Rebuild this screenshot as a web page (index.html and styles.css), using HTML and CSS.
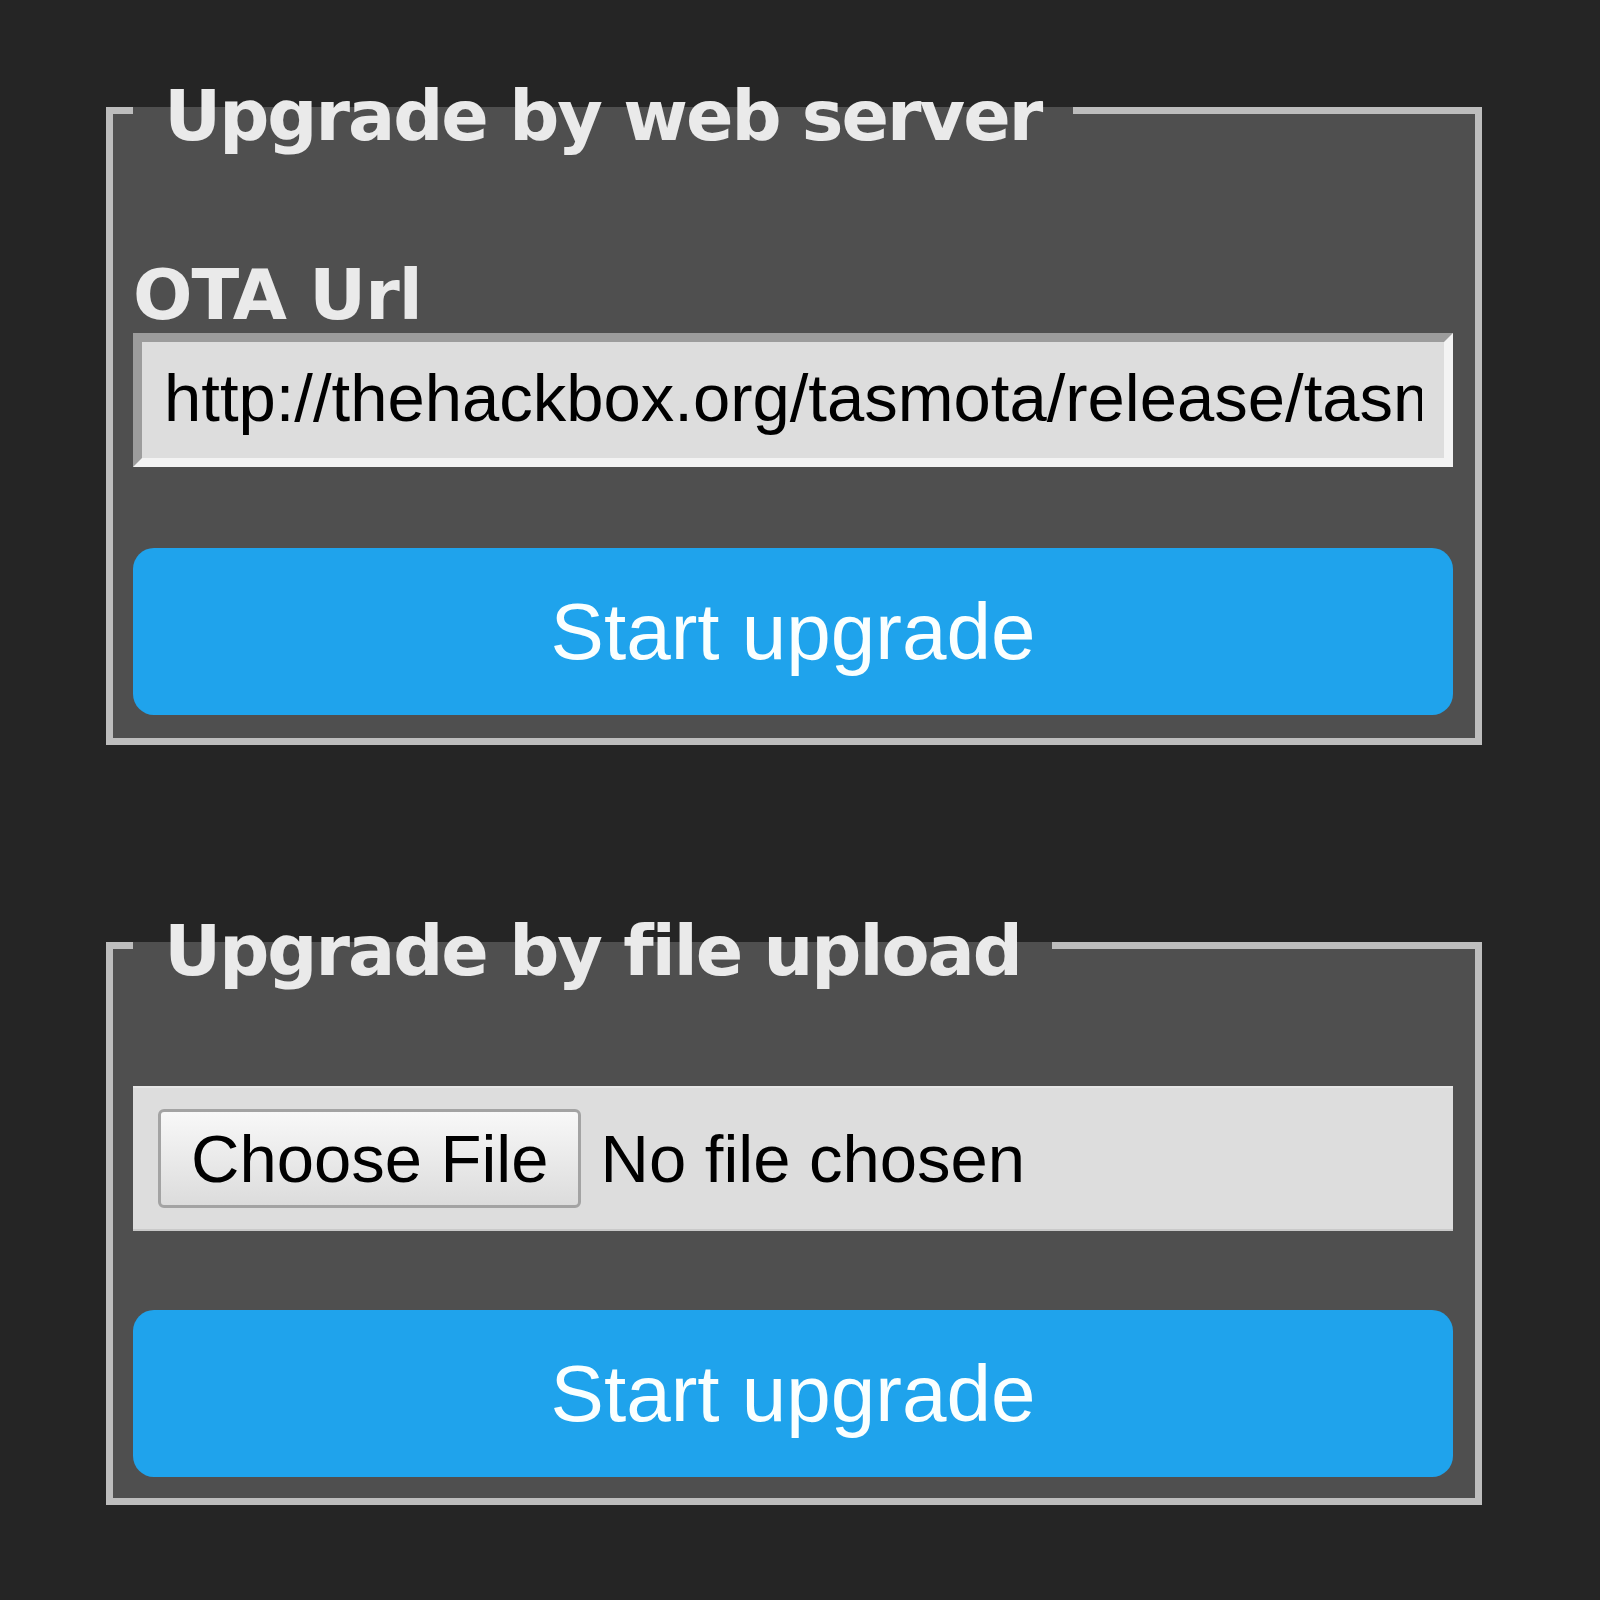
FILE: index.html
```html
<!DOCTYPE html>
<html lang="en">
<head>
<meta charset="utf-8">
<title>Firmware upgrade</title>
<link rel="stylesheet" href="styles.css">
</head>
<body>
<div class="page">
  <fieldset class="box box-web">
    <legend class="legend"><b>&nbsp;Upgrade by web server&nbsp;</b></legend>
    <form class="form form-web">
      <label class="label" for="o">OTA Url</label>
      <input class="url" id="o" type="text" value="http://thehackbox.org/tasmota/release/tasmota.bin">
      <button class="go" type="button">Start upgrade</button>
    </form>
  </fieldset>
  <fieldset class="box box-file">
    <legend class="legend"><b>&nbsp;Upgrade by file upload&nbsp;</b></legend>
    <form class="form form-file">
      <div class="file">
        <span class="file-btn">Choose File</span>
        <span class="file-name">No file chosen</span>
      </div>
      <button class="go" type="button">Start upgrade</button>
    </form>
  </fieldset>
</div>
</body>
</html>
```
FILE: styles.css
```css
html, body {
  margin: 0;
  padding: 0;
  background: #252525;
}
body {
  font-family: "DejaVu Sans", Verdana, sans-serif;
  color: #eaeaea;
}
.page {
  padding: 63px 0 0 106px;
  width: 1376px;
}
.box {
  margin: 0;
  min-width: 0;
  background: #4f4f4f;
  border: 7px solid #bdbdbd;
  padding: 0 22px 23px 20px;
}
.box-file {
  margin-top: 153px;
  padding-bottom: 21px;
}
.legend {
  padding: 12px 9px 0;
  line-height: 82px;
  font-size: 70px;
  font-weight: bold;
  letter-spacing: -2px;
  color: #eaeaea;
}
.form {
  display: flex;
  flex-direction: column;
}
.form-web {
  padding-top: 100px;
}
.form-file {
  padding-top: 94px;
}
.label {
  display: block;
  height: 76px;
  line-height: 76px;
  font-size: 70px;
  font-weight: bold;
  letter-spacing: -1px;
  color: #eaeaea;
}
.url {
  display: block;
  width: 100%;
  height: 134px;
  box-sizing: border-box;
  margin: 0;
  padding: 0 22px 5px;
  border-style: solid;
  border-width: 9px;
  border-color: #9c9c9c #f3f3f3 #f3f3f3 #9c9c9c;
  background: #dddddd;
  color: #000;
  font-family: "Liberation Sans", Arial, sans-serif;
  font-size: 67px;
  outline: none;
}
.go {
  display: block;
  width: 100%;
  height: 167px;
  margin: 81px 0 0;
  padding: 0;
  border: 0;
  border-radius: 21px;
  background: #1fa3ec;
  color: #faffff;
  font-family: "Liberation Sans", Arial, sans-serif;
  font-size: 80px;
}
.form-file .go {
  margin-top: 79px;
}
.file {
  display: flex;
  align-items: center;
  height: 145px;
  box-sizing: border-box;
  padding-left: 25px;
  background: #dddddd;
  border-top: 2px solid #e6e6e6;
  border-bottom: 2px solid #c9c9c9;
  color: #000;
  font-family: "Liberation Sans", Arial, sans-serif;
  font-size: 67px;
}
.file-btn {
  display: flex;
  align-items: center;
  height: 99px;
  box-sizing: border-box;
  padding: 0 29px 0 30px;
  border: 3px solid #a3a3a3;
  border-radius: 6px;
  background: linear-gradient(#f8f8f8, #dcdcdc);
}
.file-name {
  margin-left: 20px;
}
```
